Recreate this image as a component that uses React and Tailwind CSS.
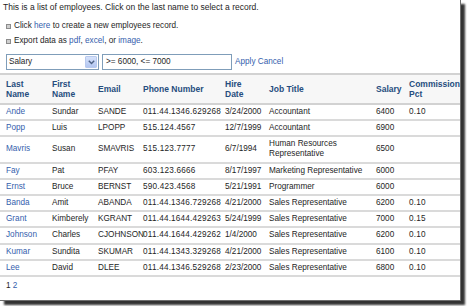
import React from 'react';

const rows = [
    { last: "Ande", first: "Sundar", email: "SANDE", phone: "011.44.1346.629268", hire: "3/24/2000", job: "Accountant", salary: "6400", pct: "0.10" },
    { last: "Popp", first: "Luis", email: "LPOPP", phone: "515.124.4567", hire: "12/7/1999", job: "Accountant", salary: "6900", pct: "" },
    { last: "Mavris", first: "Susan", email: "SMAVRIS", phone: "515.123.7777", hire: "6/7/1994", job: "Human Resources Representative", salary: "6500", pct: "", tall: true },
    { last: "Fay", first: "Pat", email: "PFAY", phone: "603.123.6666", hire: "8/17/1997", job: "Marketing Representative", salary: "6000", pct: "" },
    { last: "Ernst", first: "Bruce", email: "BERNST", phone: "590.423.4568", hire: "5/21/1991", job: "Programmer", salary: "6000", pct: "" },
    { last: "Banda", first: "Amit", email: "ABANDA", phone: "011.44.1346.729268", hire: "4/21/2000", job: "Sales Representative", salary: "6200", pct: "0.10" },
    { last: "Grant", first: "Kimberely", email: "KGRANT", phone: "011.44.1644.429263", hire: "5/24/1999", job: "Sales Representative", salary: "7000", pct: "0.15" },
    { last: "Johnson", first: "Charles", email: "CJOHNSON", phone: "011.44.1644.429262", hire: "1/4/2000", job: "Sales Representative", salary: "6200", pct: "0.10" },
    { last: "Kumar", first: "Sundita", email: "SKUMAR", phone: "011.44.1343.329268", hire: "4/21/2000", job: "Sales Representative", salary: "6100", pct: "0.10" },
    { last: "Lee", first: "David", email: "DLEE", phone: "011.44.1346.529268", hire: "2/23/2000", job: "Sales Representative", salary: "6800", pct: "0.10" },
];

const cols = "grid grid-cols-[48px_46px_45px_82px_44px_107px_34px_1fr]";

const Bullet = () => (
    <span className="inline-block w-[5px] h-[5px] border border-[#8c8c8c] bg-[#cfcfcf] mr-[3px]" />
);

const App = () => {
    return (
        <div className="w-[467px] h-[306px] bg-white overflow-hidden font-['Liberation_Sans',Arial,sans-serif] text-[8.2px] text-[#1e1e1e]">
            <div className="w-[461px] h-[301px] bg-white border-r border-b border-[#6e6e6e] shadow-[4px_4px_2px_rgba(0,0,0,0.8)] overflow-hidden">
                <div className="pl-[3px] pt-[2px] leading-[10px] text-[8.5px]">
                    This is a list of employees. Click on the last name to select a record.
                </div>

                <div className="mt-[9px] pl-[6px] flex flex-col gap-[5px] leading-[10px]">
                    <div className="flex items-center">
                        <Bullet />
                        <span>Click <a className="text-[#3560ad]">here</a> to create a new employees record.</span>
                    </div>
                    <div className="flex items-center">
                        <Bullet />
                        <span>Export data as <a className="text-[#3560ad]">pdf</a>, <a className="text-[#3560ad]">excel</a>, or <a className="text-[#3560ad]">image</a>.</span>
                    </div>
                </div>

                {/* filter bar */}
                <div className="mt-[8px] ml-[6px] flex items-center h-[16px]">
                    <div className="w-[93px] h-[16px] border border-[#7f9db9] flex items-center justify-between pl-[2px] pr-[1px]">
                        <span>Salary</span>
                        <span className="w-[12px] h-[12px] rounded-[1px] bg-gradient-to-b from-[#d6e2fb] to-[#b3c6f0] border border-[#b8c9ee] flex items-center justify-center">
                            <svg width="7" height="5" viewBox="0 0 7 5">
                                <path d="M0.8 0.8 L3.5 3.6 L6.2 0.8" fill="none" stroke="#4d6185" strokeWidth="1.4" />
                            </svg>
                        </span>
                    </div>
                    <div className="ml-[3px] w-[130px] h-[16px] border border-[#7f9db9] flex items-center pl-[3px]">
                        &gt;= 6000, &lt;= 7000
                    </div>
                    <span className="ml-[3px] text-[#3560ad]">Apply Cancel</span>
                </div>

                {/* table */}
                <div className="mt-[3px]">
                    <div className={`${cols} h-[32px] border-t-2 border-b-2 border-[#d2d2d2] bg-[#f7f7f7] items-center font-bold text-[8.5px] leading-[10px] text-[#264d7e]`}>
                        <div className="pl-[6px]">Last<br />Name</div>
                        <div className="pl-[4px]">First<br />Name</div>
                        <div className="pl-[4px]">Email</div>
                        <div className="pl-[4px]">Phone Number</div>
                        <div className="pl-[4px]">Hire<br />Date</div>
                        <div className="pl-[4px]">Job Title</div>
                        <div className="pl-[4px]">Salary</div>
                        <div className="pl-[3px] whitespace-nowrap">Commission<br />Pct</div>
                    </div>
                    {rows.map((r, i) => (
                        <div key={i} className={`${cols} ${r.tall ? 'h-[26.2px]' : 'h-[16.2px]'} border-b-2 border-[#dadada] items-center leading-[10px]`}>
                            <div className="pl-[6px] text-[#3560ad]">{r.last}</div>
                            <div className="pl-[4px]">{r.first}</div>
                            <div className="pl-[4px] whitespace-nowrap">{r.email}</div>
                            <div className="pl-[4px] whitespace-nowrap tracking-[0.2px]">{r.phone}</div>
                            <div className="pl-[4px] whitespace-nowrap">{r.hire}</div>
                            <div className="pl-[4px]">
                                {r.tall ? <>Human Resources<br />Representative</> : r.job}
                            </div>
                            <div className="pl-[4px]">{r.salary}</div>
                            <div className="pl-[3px] tracking-[0.2px]">{r.pct}</div>
                        </div>
                    ))}
                </div>

                <div className="mt-[4px] pl-[6px] leading-[10px]">
                    1 <a className="text-[#3560ad]">2</a>
                </div>
            </div>
        </div>
    );
};

export default App;
